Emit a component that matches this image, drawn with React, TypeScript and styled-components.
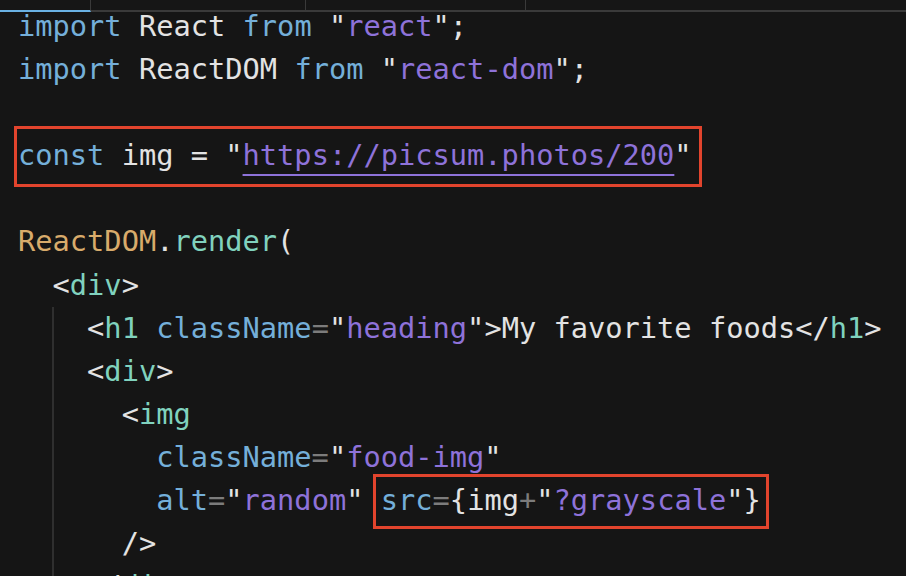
import styled, { createGlobalStyle } from "styled-components";

const colors = {
  kw: "#74afd9",
  txt: "#e3e3e3",
  str: "#8e72d9",
  tag: "#80d2be",
  cls: "#d8ab6b",
  op: "#7c7c7c",
};

type Kind = keyof typeof colors;

const GlobalStyle = createGlobalStyle`
  html, body {
    margin: 0;
    padding: 0;
    background: #151515;
    overflow: hidden;
  }
`;

export default function App() {
  return (
    <>
      <GlobalStyle />
      <Editor>
        <TabBar>
          <Tab $w={91} $active />
          <Tab $w={215} />
          <Tab $w={220} />
          <Tab $w={380} $last />
        </TabBar>
        <Viewport>
          <Code>
            <Line $indent={0}>
              <T $c="kw">import</T> <T $c="txt">React</T> <T $c="kw">from</T>{" "}
              <T $c="txt">"</T>
              <T $c="str">react</T>
              <T $c="txt">";</T>
            </Line>
            <Line $indent={0}>
              <T $c="kw">import</T> <T $c="txt">ReactDOM</T> <T $c="kw">from</T>{" "}
              <T $c="txt">"</T>
              <T $c="str">react-dom</T>
              <T $c="txt">";</T>
            </Line>
            <Line $indent={0}> </Line>
            <Line $indent={0}>
              <Mark $pt={9} $pb={11.6} $pl={1} $pr={7} $ml={-4}>
                <T $c="kw">const</T> <T $c="txt">img = "</T>
                <Link>https://picsum.photos/200</Link>
                <T $c="txt">"</T>
              </Mark>
            </Line>
            <Line $indent={0}> </Line>
            <Line $indent={0}>
              <T $c="cls">ReactDOM</T>
              <T $c="txt">.</T>
              <T $c="tag">render</T>
              <T $c="txt">(</T>
            </Line>
            <Line $indent={2}>
              <T $c="txt">&lt;</T>
              <T $c="tag">div</T>
              <T $c="txt">&gt;</T>
            </Line>
            <Line $indent={4} $guide>
              <T $c="txt">&lt;</T>
              <T $c="tag">h1</T> <T $c="kw">className</T>
              <T $c="op">=</T>
              <T $c="txt">"</T>
              <T $c="str">heading</T>
              <T $c="txt">"&gt;My favorite foods&lt;/</T>
              <T $c="tag">h1</T>
              <T $c="txt">&gt;</T>
            </Line>
            <Line $indent={4} $guide>
              <T $c="txt">&lt;</T>
              <T $c="tag">div</T>
              <T $c="txt">&gt;</T>
            </Line>
            <Line $indent={6} $guide>
              <T $c="txt">&lt;</T>
              <T $c="tag">img</T>
            </Line>
            <Line $indent={8} $guide>
              <T $c="kw">className</T>
              <T $c="op">=</T>
              <T $c="txt">"</T>
              <T $c="str">food-img</T>
              <T $c="txt">"</T>
            </Line>
            <Line $indent={8} $guide>
              <T $c="kw">alt</T>
              <T $c="op">=</T>
              <T $c="txt">"</T>
              <T $c="str">random</T>
              <T $c="txt">"</T>{" "}
              <Mark $pt={5.6} $pb={8.8} $pl={4.6} $pr={5} $ml={-7.6}>
                <T $c="kw">src</T>
                <T $c="op">=</T>
                <T $c="txt">{"{img"}</T>
                <T $c="op">+</T>
                <T $c="txt">"</T>
                <T $c="str">?grayscale</T>
                <T $c="txt">{'"}'}</T>
              </Mark>
            </Line>
            <Line $indent={6} $guide>
              <T $c="txt">/&gt;</T>
            </Line>
            <Line $indent={4} $guide>
              <T $c="txt">&lt;/</T>
              <T $c="tag">div</T>
              <T $c="txt">&gt;</T>
            </Line>
          </Code>
        </Viewport>
      </Editor>
    </>
  );
}

const Editor = styled.div`
  width: 906px;
  height: 576px;
  display: flex;
  flex-direction: column;
  background: #151515;
  overflow: hidden;
`;

const TabBar = styled.div`
  display: flex;
  height: 12px;
  flex-shrink: 0;
  position: relative;
  z-index: 1;
  background: #161616;
`;

const Tab = styled.div<{ $w: number; $active?: boolean; $last?: boolean }>`
  width: ${(p) => p.$w}px;
  flex-shrink: 0;
  box-sizing: border-box;
  border-bottom: 2px solid ${(p) => (p.$active ? "#6ab1e3" : "#3a3a3a")};
  border-right: ${(p) => (p.$last ? "none" : "1px solid #3a3a3a")};
`;

const Viewport = styled.div`
  flex: 1;
  overflow: hidden;
`;

const Code = styled.div`
  margin-top: -7px;
  font-family: "DejaVu Sans Mono", "Liberation Mono", monospace;
  font-size: 28.7px;
  line-height: 43.1px;
  white-space: pre;
  color: ${colors.txt};
`;

const Line = styled.div<{ $indent: number; $guide?: boolean }>`
  height: 43.1px;
  padding-left: calc(18px + ${(p) => p.$indent}ch);
  background: ${(p) =>
    p.$guide ? "linear-gradient(#2f2f2f, #2f2f2f) no-repeat 52px 0 / 2px 100%" : "none"};
`;

const T = styled.span<{ $c: Kind }>`
  color: ${(p) => colors[p.$c]};
`;

const Link = styled.span`
  color: ${colors.str};
  text-decoration: underline;
  text-decoration-color: ${colors.str};
  text-decoration-thickness: 2px;
  text-underline-offset: 9px;
`;

const Mark = styled.span<{ $pt: number; $pb: number; $pl: number; $pr: number; $ml: number }>`
  border: 3px solid #e2442d;
  padding: ${(p) => `${p.$pt}px ${p.$pr}px ${p.$pb}px ${p.$pl}px`};
  margin-left: ${(p) => p.$ml}px;
`;
